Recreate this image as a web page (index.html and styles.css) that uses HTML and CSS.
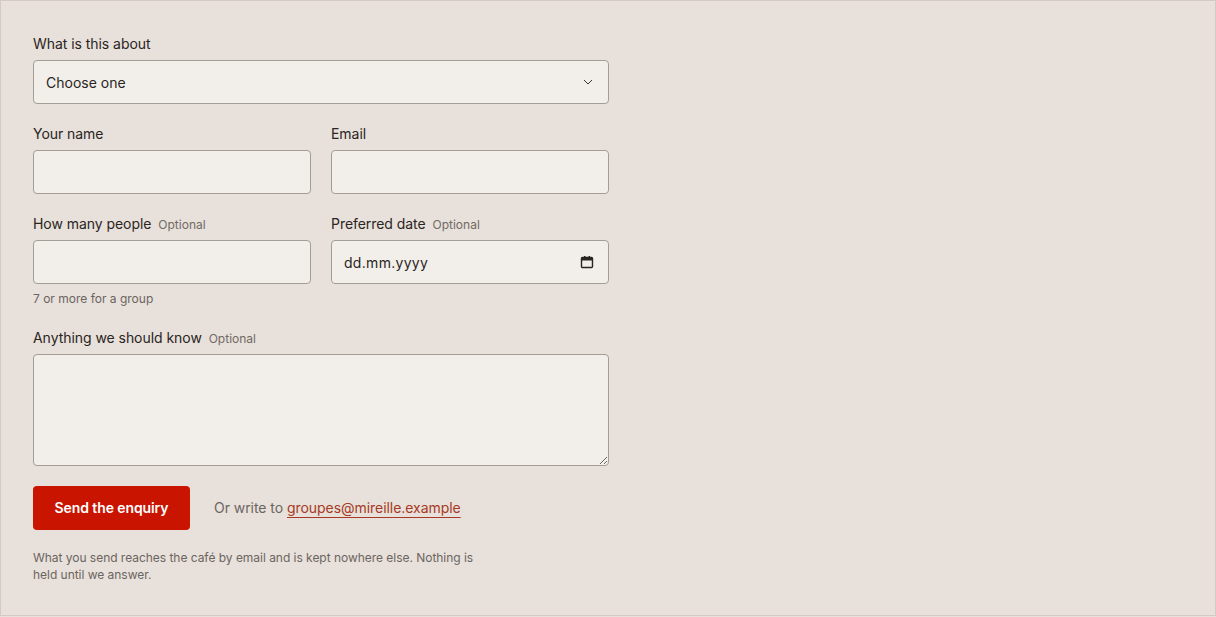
FILE: index.html
```html
<!DOCTYPE html>
<html lang="en">
<head>
    <meta charset="UTF-8">
    <meta name="viewport" content="width=device-width, initial-scale=1.0">
    <title>Group enquiry</title>
    <link rel="stylesheet" href="styles.css">
</head>
<body>
    <div class="page">
        <form class="enquiry" onsubmit="return false">
            <div class="field">
                <label class="label" for="topic">What is this about</label>
                <div class="selectWrap">
                    <select id="topic" class="control">
                        <option>Choose one</option>
                        <option>A group booking</option>
                        <option>A private event</option>
                        <option>Something else</option>
                    </select>
                    <svg class="chevron" width="10" height="6" viewBox="0 0 10 6"><path d="M1 1l4 4 4-4" fill="none" stroke="#3a3532" stroke-width="1"/></svg>
                </div>
            </div>
            <div class="row">
                <div class="field">
                    <label class="label" for="name">Your name</label>
                    <input id="name" class="control" type="text">
                </div>
                <div class="field">
                    <label class="label" for="email">Email</label>
                    <input id="email" class="control" type="email">
                </div>
            </div>
            <div class="row">
                <div class="field">
                    <label class="label" for="people">How many people <span class="optional">Optional</span></label>
                    <input id="people" class="control" type="text">
                    <div class="hint">7 or more for a group</div>
                </div>
                <div class="field">
                    <label class="label" for="date">Preferred date <span class="optional">Optional</span></label>
                    <div class="dateWrap">
                        <input id="date" class="control date" type="text" placeholder="dd.mm.yyyy">
                        <svg class="calendar" width="14" height="14" viewBox="0 0 14 14"><rect x="1.5" y="2.5" width="11" height="10" rx="1" fill="none" stroke="#2a2522" stroke-width="1.4"/><rect x="1.5" y="2.5" width="11" height="3" fill="#2a2522"/><rect x="4" y="1" width="1.4" height="2.5" fill="#2a2522"/><rect x="8.6" y="1" width="1.4" height="2.5" fill="#2a2522"/></svg>
                    </div>
                </div>
            </div>
            <div class="field">
                <label class="label" for="notes">Anything we should know <span class="optional">Optional</span></label>
                <textarea id="notes" class="control notes"></textarea>
            </div>
            <div class="actions">
                <button class="send" type="submit">Send the enquiry</button>
                <span class="alt">Or write to <a href="mailto:groupes@mireille.example">groupes@mireille.example</a></span>
            </div>
            <p class="note">What you send reaches the café by email and is kept nowhere else. Nothing is held until we answer.</p>
        </form>
    </div>
</body>
</html>
```
FILE: styles.css
```css
* {
    box-sizing: border-box;
}
body {
    margin: 0;
    background: #e8e0da;
    font-family: Inter, "Noto Sans", sans-serif;
    color: #2a2522;
    letter-spacing: -0.05px;
}
.page {
    height: 616px;
    border: 1px solid #d3cbc3;
    padding: 33px 32px;
}
.enquiry {
    width: 576px;
    display: flex;
    flex-direction: column;
    gap: 20px;
}
.row {
    display: grid;
    grid-template-columns: 1fr 1fr;
    gap: 20px;
}
.field {
    display: flex;
    flex-direction: column;
}
.label {
    font-size: 14px;
    line-height: 20px;
    height: 20px;
    margin-bottom: 6px;
}
.optional {
    font-size: 12px;
    line-height: 1;
    color: #706a65;
    margin-left: 3px;
    letter-spacing: 0;
}
.control {
    width: 100%;
    height: 44px;
    border: 1px solid #a39d96;
    border-radius: 4px;
    background: #f2efea;
    font-family: inherit;
    font-size: 14px;
    color: #2a2522;
    padding: 0 12px;
    outline: none;
}
select.control {
    appearance: none;
    -webkit-appearance: none;
}
.selectWrap, .dateWrap {
    position: relative;
}
.chevron {
    position: absolute;
    right: 16px;
    top: 19px;
    pointer-events: none;
}
.calendar {
    position: absolute;
    right: 15px;
    top: 15px;
    pointer-events: none;
}
.date::placeholder {
    color: #2a2522;
    letter-spacing: 0.3px;
}
.hint {
    font-size: 12px;
    line-height: 18px;
    color: #6b6561;
    margin-top: 6px;
    letter-spacing: 0;
}
.notes {
    height: 112px;
    padding: 10px 12px;
    resize: vertical;
}
.actions {
    display: flex;
    align-items: center;
    gap: 24px;
}
.send {
    height: 44px;
    min-width: 157px;
    padding: 0 21px 2px;
    border: none;
    border-radius: 4px;
    background: #c91400;
    color: #fff;
    font-family: inherit;
    font-size: 14px;
    font-weight: 600;
    letter-spacing: -0.1px;
}
.alt {
    font-size: 14px;
    color: #6b6561;
    margin-bottom: 2px;
}
.alt a {
    color: #a63a24;
    text-decoration: underline;
    text-underline-offset: 4px;
    text-decoration-thickness: 1px;
}
.note {
    margin: -1px 0 0;
    max-width: 448px;
    font-size: 12px;
    line-height: 17px;
    color: #6b6561;
    letter-spacing: -0.03px;
}
```
